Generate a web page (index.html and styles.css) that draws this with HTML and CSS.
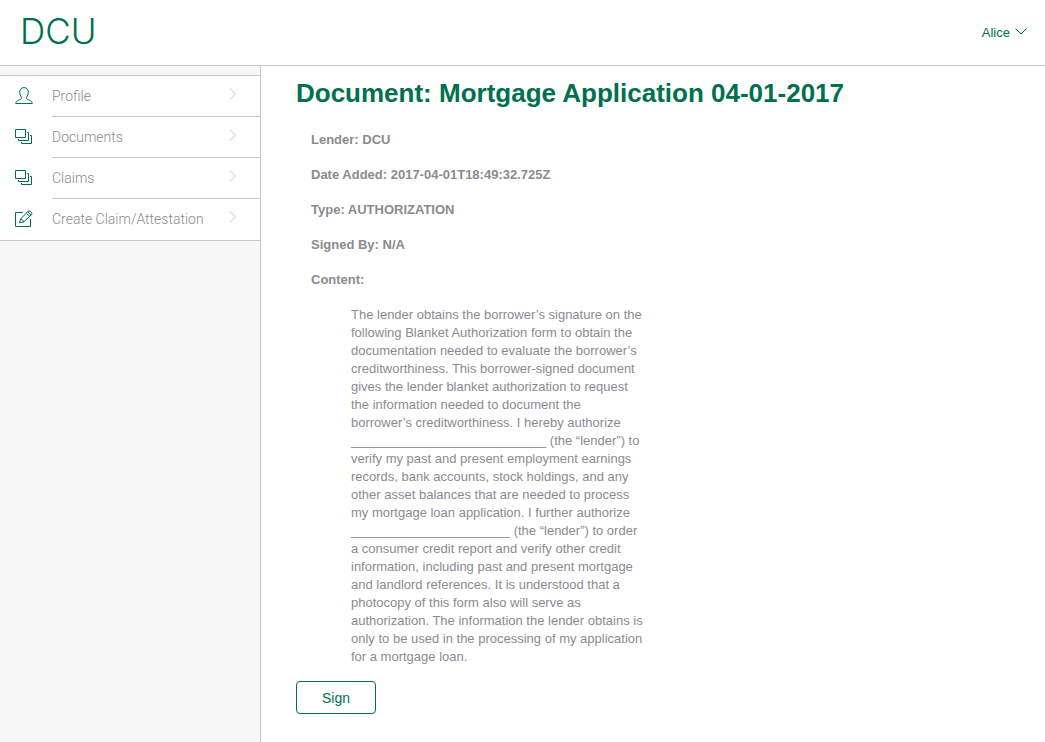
FILE: index.html
```html
<!DOCTYPE html>
<html lang="en">
<head>
<meta charset="utf-8">
<meta name="viewport" content="width=device-width, initial-scale=1">
<title>DCU</title>
<link rel="stylesheet" href="styles.css">
</head>
<body>
<svg class="sprite" aria-hidden="true">
  <symbol id="user" viewBox="0 0 18 18"><path d="M6.600 11.300C6.600 9.800 4.700 8.500 4.700 5.200C4.700 2.200 6.400 .6 9 .6S13.300 2.200 13.300 5.200C13.300 8.500 11.400 9.800 11.400 11.300C11.400 12.900 17 12.700 17.300 16.500H.7C1 12.700 6.600 12.900 6.600 11.300Z"/></symbol>
  <symbol id="stack" viewBox="0 0 18 18"><path d="M.5 1.500h10v8H.5zM12 4.500h1.500v8h-10V11M15 7.500h1.500v8h-10V14"/></symbol>
  <symbol id="edit" viewBox="0 0 18 18"><path d="M8 2.500H.5v14h15V9M4.500 12.700L5.700 9L12.800 1.500Q14 .4 15.200 1.300L16.300 2.200Q17.500 3.300 16.500 4.600L8.700 12ZM11.300 3L15 6.600M12.800 1.800L16.200 5M5.700 9Q8 9.500 8.700 12"/></symbol>
  <symbol id="chevron" viewBox="0 0 8 12"><path d="M1 .5L6.500 6L1 11.500"/></symbol>
</svg>
<header class="topbar">
  <a class="brand" href="#">DCU</a>
  <button class="account" type="button">Alice
    <svg class="caret" viewBox="0 0 12 7" aria-hidden="true"><path d="M.5.5L6 6L11.500.5"/></svg>
  </button>
</header>
<div class="layout">
  <nav class="sidebar" aria-label="Main">
    <ul class="menu">
      <li><a class="item" href="#"><svg class="icon" aria-hidden="true"><use href="#user"/></svg><span class="label">Profile<svg class="chevron" aria-hidden="true"><use href="#chevron"/></svg></span></a></li>
      <li><a class="item" href="#"><svg class="icon" aria-hidden="true"><use href="#stack"/></svg><span class="label">Documents<svg class="chevron" aria-hidden="true"><use href="#chevron"/></svg></span></a></li>
      <li><a class="item" href="#"><svg class="icon" aria-hidden="true"><use href="#stack"/></svg><span class="label">Claims<svg class="chevron" aria-hidden="true"><use href="#chevron"/></svg></span></a></li>
      <li><a class="item" href="#"><svg class="icon" aria-hidden="true"><use href="#edit"/></svg><span class="label">Create Claim/Attestation<svg class="chevron" aria-hidden="true"><use href="#chevron"/></svg></span></a></li>
    </ul>
  </nav>
  <main class="main">
    <h1 class="title">Document: Mortgage Application 04-01-2017</h1>
    <section class="details">
      <p class="field">Lender: DCU</p>
      <p class="field">Date Added: 2017-04-01T18:49:32.725Z</p>
      <p class="field">Type: AUTHORIZATION</p>
      <p class="field">Signed By: N/A</p>
      <p class="field">Content:</p>
      <blockquote class="content">The lender obtains the borrower’s signature on the following Blanket Authorization form to obtain the documentation needed to evaluate the borrower’s creditworthiness. This borrower-signed document gives the lender blanket authorization to request the information needed to document the borrower’s creditworthiness. I hereby authorize ___________________________ (the “lender”) to verify my past and present employment earnings records, bank accounts, stock holdings, and any other asset balances that are needed to process my mortgage loan application. I further authorize ______________________ (the “lender”) to order a consumer credit report and verify other credit information, including past and present mortgage and landlord references. It is understood that a photocopy of this form also will serve as authorization. The information the lender obtains is only to be used in the processing of my application for a mortgage loan.</blockquote>
    </section>
    <button class="sign" type="button">Sign</button>
  </main>
</div>
</body>
</html>
```
FILE: styles.css
```css
* { box-sizing: border-box; }
body {
  margin: 0;
  min-height: 100vh;
  display: flex;
  flex-direction: column;
  font: 13px/18px "Liberation Sans", Arial, sans-serif;
  color: #8b8b8f;
  background: #fff;
}
svg { fill: none; stroke: currentColor; flex: none; }
.sprite { display: none; }
.topbar {
  display: flex;
  align-items: center;
  justify-content: space-between;
  height: 66px;
  padding: 0 18px 0 20px;
  border-bottom: 1px solid #c8c7cc;
}
.brand {
  padding-bottom: 3px;
  font: 300 35px/60px Inter, Roboto, sans-serif;
  color: #00704e;
  text-decoration: none;
}
.account {
  display: flex;
  align-items: center;
  gap: 5px;
  padding: 0;
  border: 0;
  background: none;
  font: inherit;
  color: #00704e;
}
.caret { width: 12px; height: 7px; margin-bottom: 2px; }
.layout { display: flex; flex: 1; }
.sidebar {
  flex: 0 0 261px;
  padding-top: 9px;
  background: #f7f7f7;
  border-right: 1px solid #c8c7cc;
}
.menu {
  margin: 0;
  padding: 0;
  list-style: none;
  background: #fff;
  border: solid #c8c7cc;
  border-width: 1px 0;
}
.item {
  display: flex;
  align-items: center;
  gap: 19px;
  padding-left: 15px;
  color: #8b8b8f;
  text-decoration: none;
}
.icon { width: 18px; height: 18px; margin-bottom: 1px; color: #00704e; }
.label {
  display: flex;
  flex: 1;
  align-items: center;
  justify-content: space-between;
  height: 41px;
  padding-right: 23px;
  border-bottom: 1px solid #c8c7cc;
  font: 300 14px/20px Roboto, sans-serif;
}
.menu li:last-child .label { border-bottom-color: transparent; }
.chevron { width: 8px; height: 12px; margin-bottom: 4px; color: #c8c7cc; }
.main { flex: 1; min-width: 0; padding: 12px 35px 28px; }
.title { margin: 0; font-size: 26px; line-height: 30px; color: #00704e; }
.details { padding: 23px 15px 0; }
.field { margin: 0 0 17px; font-weight: bold; }
.content { margin: 0 40px; max-width: 293px; }
.sign {
  display: block;
  width: 80px;
  height: 33px;
  margin-top: 15px;
  border: 1px solid #00704e;
  border-radius: 4px;
  background: #fff;
  font: 14px/20px "Liberation Sans", Arial, sans-serif;
  color: #00704e;
}
```
